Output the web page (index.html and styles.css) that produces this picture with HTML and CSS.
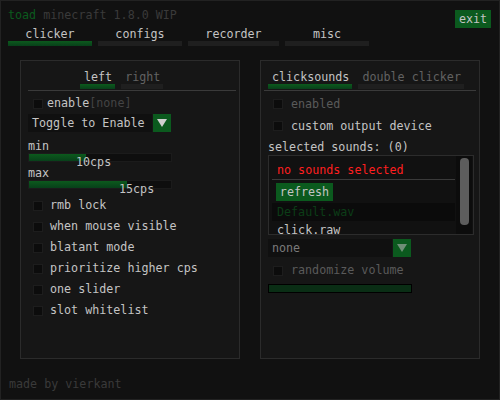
FILE: index.html
```html
<!DOCTYPE html>
<html>
<head>
<meta charset="utf-8">
<link rel="stylesheet" href="styles.css">
</head>
<body>
<div class="window">
  <div class="header">
    <div class="title"><span class="brand">toad</span> minecraft 1.8.0 WIP</div>
    <div class="exit">exit</div>
  </div>
  <div class="tabs">
    <div class="tab active"><span>clicker</span><i></i></div>
    <div class="tab"><span>configs</span><i></i></div>
    <div class="tab wide"><span>recorder</span><i></i></div>
    <div class="tab"><span>misc</span><i></i></div>
  </div>
  <div class="panels">
    <div class="panel">
      <div class="subtabs left-sub">
        <div class="subtab active"><span>left</span><i></i></div>
        <div class="subtab dim"><span>right</span><i></i></div>
      </div>
      <div class="sep sep-left"></div>
      <div class="content">
        <div class="row enable-row"><span class="box"></span><span>enable</span><span class="muted">[none]</span></div>
        <div class="dropdown"><div class="dd-text">Toggle to Enable</div><div class="dd-arrow"><svg width="10" height="8" viewBox="0 0 10 8"><path d="M0 0H10L5 8Z" fill="#d0d0d0"/></svg></div></div>
        <div class="label first-label">min</div>
        <div class="slider"><div class="fill" style="width:40%"></div><span class="value" style="left:47px">10cps</span></div>
        <div class="label second-label">max</div>
        <div class="slider"><div class="fill" style="width:69%"></div><span class="value" style="left:90px">15cps</span></div>
        <div class="checks">
          <div class="row check"><span class="box"></span><span>rmb lock</span></div>
          <div class="row check"><span class="box"></span><span>when mouse visible</span></div>
          <div class="row check"><span class="box"></span><span>blatant mode</span></div>
          <div class="row check"><span class="box"></span><span>prioritize higher cps</span></div>
          <div class="row check"><span class="box"></span><span>one slider</span></div>
          <div class="row check"><span class="box"></span><span>slot whitelist</span></div>
        </div>
      </div>
    </div>
    <div class="panel">
      <div class="subtabs right-sub">
        <div class="subtab active"><span>clicksounds</span><i></i></div>
        <div class="subtab dim"><span>double clicker</span><i></i></div>
      </div>
      <div class="sep sep-right"></div>
      <div class="content">
        <div class="row rcheck disabled"><span class="box"></span><span>enabled</span></div>
        <div class="row rcheck"><span class="box"></span><span>custom output device</span></div>
        <div class="label sel-label">selected sounds: (0)</div>
        <div class="list">
          <div class="list-items">
            <div class="no-sounds">no sounds selected</div>
            <div class="list-sep"></div>
            <div class="refresh">refresh</div>
            <div class="item selected">Default.wav</div>
            <div class="item">click.raw</div>
          </div>
          <div class="scroll"><div class="thumb"></div></div>
        </div>
        <div class="dropdown none-dd"><div class="dd-text grey">none</div><div class="dd-arrow"><svg width="10" height="8" viewBox="0 0 10 8"><path d="M0 0H10L5 8Z" fill="#6f8f77"/></svg></div></div>
        <div class="row rcheck disabled rand"><span class="box"></span><span>randomize volume</span></div>
        <div class="slider vol"><div class="fill full" style="width:100%"></div></div>
      </div>
    </div>
  </div>
  <div class="footer">made by vierkant</div>
</div>
</body>
</html>
```
FILE: styles.css
```css
* { box-sizing: border-box; }
html, body { margin: 0; padding: 0; background: #111111; }
body {
  font-family: "DejaVu Sans Mono", "Liberation Mono", monospace;
  font-size: 11.7px;
  line-height: 13px;
  color: #c4c4c4;
}
.window {
  width: 500px;
  height: 400px;
  border: 1px solid #222222;
  background: #111111;
  padding: 0 7px;
  display: flex;
  flex-direction: column;
}
.header {
  height: 27px;
  display: flex;
  justify-content: space-between;
  align-items: flex-start;
}
.title { margin-top: 8px; color: #3a3a3a; }
.brand { color: #0b5a1e; }
.exit {
  margin-top: 9px;
  margin-right: 1px;
  width: 36px;
  height: 18px;
  line-height: 18px;
  text-align: center;
  background: #0b5a1e;
  color: #c4c4c4;
}
.tabs { display: flex; gap: 6px; }
.tab { width: 84px; display: flex; flex-direction: column; align-items: center; }
.tab.wide { width: 91px; }
.tab span { height: 13px; }
.tab i { display: block; width: 100%; height: 5px; background: #1f1f1f; }
.tab.active i { background: linear-gradient(#0c5a1d, #08401a); }
.panels {
  display: flex;
  gap: 20px;
  margin-top: 14px;
  padding-left: 12px;
}
.panel {
  width: 220px;
  height: 299px;
  background: #161616;
  border: 1px solid #2b2b2b;
  padding-top: 10px;
}
.subtabs { display: flex; gap: 6px; }
.left-sub { padding-left: 59px; }
.right-sub { padding-left: 7px; }
.subtab { display: flex; flex-direction: column; align-items: center; padding: 0; }
.subtab span { height: 13px; padding: 0 3px 0 4px; }
.subtab i { display: block; width: 100%; height: 5px; background: #1f1f1f; }
.subtab.active i { background: linear-gradient(#0c5a1d, #08401a); }
.subtab.dim span { color: #626262; }
.sep { height: 1px; background: #3a3a3a; margin-top: 1px; }
.sep-left { margin-left: 7px; margin-right: 3px; }
.sep-right { margin-left: 3px; margin-right: 3px; }
.content { padding: 0 7px; }
.row { display: flex; align-items: center; height: 13px; }
.box {
  width: 10px;
  height: 10px;
  background: #0c0c0c;
  border: 1px solid #1d1d1d;
  flex: none;
}
.enable-row { margin-top: 6px; }
.enable-row .box { margin-left: 5px; margin-right: 4px; }
.muted { color: #444444; }
.dropdown {
  margin-top: 4px;
  display: flex;
  height: 18px;
  width: 143px;
}
.dd-text {
  width: 124px;
  background: #101010;
  padding-left: 4px;
  line-height: 18px;
}
.dd-text.grey { color: #7a7a7a; }
.dd-arrow {
  width: 18px;
  margin-left: 1px;
  background: #0b5a1e;
  display: flex;
  align-items: center;
  justify-content: center;
}
.label { height: 13px; }
.first-label { margin-top: 8px; }
.second-label { margin-top: 5px; }
.slider {
  position: relative;
  width: 144px;
  height: 9px;
  background: #0e0e0e;
  border: 1px solid #1b1b1b;
}
.fill { height: 100%; background: linear-gradient(#0c5a1d, #08401a); }
.fill.full { background: #0a2e15; }
.value {
  position: absolute;
  top: 2px;
  line-height: 13px;
  color: #c4c4c4;
}
.checks { margin-top: 6px; }
.check { height: 21px; }
.check .box { margin-left: 5px; margin-right: 7px; }
.rcheck { height: 22px; }
.rcheck .box { margin-left: 5px; margin-right: 8px; }
.content > .rcheck:first-child { margin-top: 2px; }
.disabled span { color: #5a5a5a; }
.sel-label { margin-top: 4px; }
.list {
  margin-top: 1px;
  width: 206px;
  height: 80px;
  border: 1px solid #2c2c2c;
  background: #111111;
  display: flex;
  overflow: hidden;
}
.list-items { width: 186px; padding-left: 3px; padding-top: 8px; }
.no-sounds { color: #ff1f1f; padding-left: 5px; height: 15px; }
.list-sep { height: 1px; background: #3a3a3a; width: 183px; }
.refresh {
  margin-top: 3px;
  margin-left: 4px;
  width: 57px;
  height: 18px;
  line-height: 18px;
  background: #0b5a1e;
  text-align: center;
}
.item { height: 18px; line-height: 18px; padding-left: 5px; width: 183px; }
.item.selected { margin-top: 2px; background: #0b0b0b; color: #0c3d17; }
.scroll {
  width: 16px;
  margin-left: 1px;
  background: #0c0c0c;
  padding: 2px 3px 0 4px;
}
.thumb { height: 67px; background: #5d5d5d; border-radius: 4px; }
.none-dd { margin-top: 4px; }
.rand { margin-top: 2px; height: 23px; }
.vol { margin-top: 2px; background: #000; border-color: #000; }
.footer { margin-top: 19px; color: #3a3a3a; padding-left: 1px; }
```
